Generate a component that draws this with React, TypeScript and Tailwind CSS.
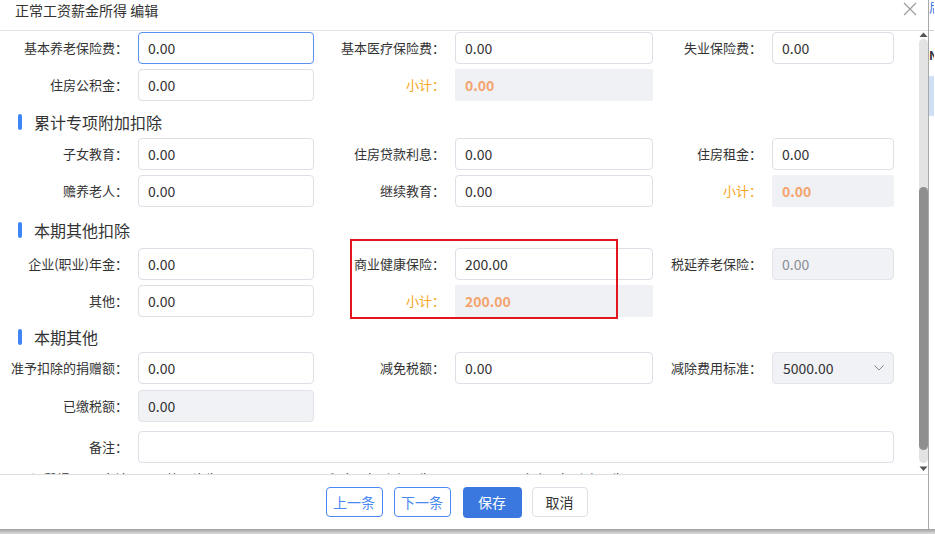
import React from "react";

type Variant = "normal" | "focus" | "disabled" | "disabledGray" | "sub" | "select";

const W = {
  l1: "w-[138px]",
  l2: "w-[141px]",
  l3: "w-[119px]",
};

function Field({ w, value, variant = "normal" }: { w: string; value: string; variant?: Variant }) {
  if (variant === "sub") {
    return (
      <div className={`${w} h-[32px] shrink-0 rounded-[2px] bg-[#f0f1f5] pl-[10px] flex items-center text-[14px] font-bold text-[#f4a46e]`}>
        {value}
      </div>
    );
  }
  if (variant === "select") {
    return (
      <div className={`${w} h-[32px] shrink-0 rounded-[4px] border border-[#e1e3e8] bg-[#f0f2f6] pl-[10px] pr-[8px] flex items-center justify-between text-[14px] text-[#333]`}>
        <span>{value}</span>
        <svg width="10" height="6" viewBox="0 0 10 6" className="mr-[1px]">
          <path d="M0.5 0.5 L5 5 L9.5 0.5" fill="none" stroke="#888" strokeWidth="1" />
        </svg>
      </div>
    );
  }
  const cls =
    variant === "focus"
      ? "border-[#5b8ff0] bg-white text-[#333]"
      : variant === "disabled"
      ? "border-[#e1e3e8] bg-[#f0f2f6] text-[#333]"
      : variant === "disabledGray"
      ? "border-[#e1e3e8] bg-[#f0f2f6] text-[#8a8d93]"
      : "border-[#dcdfe6] bg-white text-[#333]";
  return (
    <div className={`${w} h-[32px] shrink-0 rounded-[4px] border ${cls} pl-[9px] flex items-center text-[14px]`}>
      {value}
    </div>
  );
}

function Label({ w, text, orange }: { w: string; text: string; orange?: boolean }) {
  return (
    <div
      className={`${w} shrink-0 pr-[10px] text-right text-[13px] leading-[18px] whitespace-nowrap ${
        orange ? "text-[#f5a623]" : "text-[#333]"
      }`}
    >
      {text}
    </div>
  );
}

function Heading({ text, cls }: { text: string; cls: string }) {
  return (
    <div className={`flex items-center pl-[18px] ${cls}`}>
      <div className="w-[4px] h-[16px] rounded-full bg-[#3f86f4]" />
      <span className="ml-[12px] text-[16px] leading-[20px] text-[#333]">{text}</span>
    </div>
  );
}

export default function App() {
  return (
    <div className="w-[935px] h-[534px] overflow-hidden bg-white font-['Noto_Sans_CJK_SC','Noto_Sans',sans-serif] flex flex-col">
      <div className="flex h-[529px]">
        {/* dialog */}
        <div className="w-[929px] h-[529px] bg-white flex flex-col border-r border-[#a9a9a9]">
          {/* header */}
          <div className="h-[31px] shrink-0 border-b border-[#e3e3e3] flex items-center justify-between pl-[15px] pr-[11px]">
            <span className="text-[14px] leading-[20px] text-[#333] -mt-[10px]">正常工资薪金所得 编辑</span>
            <svg width="14" height="14" viewBox="0 0 14 14" className="-mt-[12px]">
              <path d="M1 1 L13 13 M13 1 L1 13" stroke="#9a9a9a" strokeWidth="1.1" />
            </svg>
          </div>

          {/* body */}
          <div className="h-[443px] shrink-0 flex">
            <div className="w-[919px] h-[443px] overflow-hidden pt-[1px] relative">
              {/* r1 */}
              <div className="flex items-center h-[32px]">
                <Label w={W.l1} text="基本养老保险费：" />
                <Field w="w-[176px]" value="0.00" variant="focus" />
                <Label w={W.l2} text="基本医疗保险费：" />
                <Field w="w-[198px]" value="0.00" />
                <Label w={W.l3} text="失业保险费：" />
                <Field w="w-[122px]" value="0.00" />
              </div>
              {/* r2 */}
              <div className="flex items-center h-[32px] mt-[5px]">
                <Label w={W.l1} text="住房公积金：" />
                <Field w="w-[176px]" value="0.00" />
                <Label w={W.l2} text="小计：" orange />
                <Field w="w-[198px]" value="0.00" variant="sub" />
              </div>

              <Heading text="累计专项附加扣除" cls="pt-[11px] pb-[6px]" />
              {/* r3 */}
              <div className="flex items-center h-[32px]">
                <Label w={W.l1} text="子女教育：" />
                <Field w="w-[176px]" value="0.00" />
                <Label w={W.l2} text="住房贷款利息：" />
                <Field w="w-[198px]" value="0.00" />
                <Label w={W.l3} text="住房租金：" />
                <Field w="w-[122px]" value="0.00" />
              </div>
              {/* r4 */}
              <div className="flex items-center h-[32px] mt-[5px]">
                <Label w={W.l1} text="赡养老人：" />
                <Field w="w-[176px]" value="0.00" />
                <Label w={W.l2} text="继续教育：" />
                <Field w="w-[198px]" value="0.00" />
                <Label w={W.l3} text="小计：" orange />
                <Field w="w-[122px]" value="0.00" variant="sub" />
              </div>

              <Heading text="本期其他扣除" cls="pt-[13px] pb-[8px]" />
              {/* r5 */}
              <div className="flex items-center h-[32px]">
                <Label w={W.l1} text="企业(职业)年金：" />
                <Field w="w-[176px]" value="0.00" />
                <Label w={W.l2} text="商业健康保险：" />
                <Field w="w-[198px]" value="200.00" />
                <Label w={W.l3} text="税延养老保险：" />
                <Field w="w-[122px]" value="0.00" variant="disabledGray" />
              </div>
              {/* r6 */}
              <div className="flex items-center h-[32px] mt-[5px]">
                <Label w={W.l1} text="其他：" />
                <Field w="w-[176px]" value="0.00" />
                <Label w={W.l2} text="小计：" orange />
                <Field w="w-[198px]" value="200.00" variant="sub" />
              </div>

              <Heading text="本期其他" cls="pt-[10px] pb-[5px]" />
              {/* r7 */}
              <div className="flex items-center h-[32px]">
                <Label w={W.l1} text="准予扣除的捐赠额：" />
                <Field w="w-[176px]" value="0.00" />
                <Label w={W.l2} text="减免税额：" />
                <Field w="w-[198px]" value="0.00" />
                <Label w={W.l3} text="减除费用标准：" />
                <Field w="w-[122px]" value="5000.00" variant="select" />
              </div>
              {/* r8 */}
              <div className="flex items-center h-[32px] mt-[6px]">
                <Label w={W.l1} text="已缴税额：" />
                <Field w="w-[176px]" value="0.00" variant="disabled" />
              </div>
              {/* r9 */}
              <div className="flex items-center h-[32px] mt-[9px]">
                <Label w={W.l1} text="备注：" />
                <Field w="w-[756px]" value="" />
              </div>
              {/* hint */}
              <div className="mt-[6px] pl-[31px] text-[13px] leading-[20px] text-[#333] whitespace-nowrap">
                温馨提示：&nbsp;&nbsp;本地区月平均工资为：10646.00元，&nbsp;公积金可扣除上限为：2002.56元，&nbsp;个人可扣除上限为：&nbsp;1277.52元
              </div>

              {/* annotation */}
              <div className="absolute left-[350px] top-[208px] w-[268px] h-[80px] border-2 border-[#e3161d]" />
            </div>

            {/* scrollbar */}
            <div className="w-[10px] h-[443px] flex flex-col items-center">
              <svg width="9" height="6" viewBox="0 0 9 6" className="mt-[1px]">
                <path d="M4.5 0.5 L8.5 5 L0.5 5 Z" fill="#555" />
              </svg>
              <div className="mt-[1px] w-[9px] h-[424px] rounded-full bg-[#e3e3e3] flex flex-col">
                <div className="mt-[148px] w-[9px] h-[263px] rounded-full bg-[#8f8f8f]" />
              </div>
              <svg width="9" height="6" viewBox="0 0 9 6" className="mt-[3px]">
                <path d="M0.5 0.5 L8.5 0.5 L4.5 5 Z" fill="#555" />
              </svg>
            </div>
          </div>

          {/* footer */}
          <div className="flex-1 border-t border-[#dedede] flex items-center justify-center pr-[15px]">
            <div className="flex items-center">
              <div className="w-[57px] h-[30px] rounded-[4px] border border-[#4a89f3] text-[#4a89f3] text-[14px] flex items-center justify-center">
                上一条
              </div>
              <div className="ml-[11px] w-[57px] h-[30px] rounded-[4px] border border-[#4a89f3] text-[#4a89f3] text-[14px] flex items-center justify-center">
                下一条
              </div>
              <div className="ml-[12px] w-[59px] h-[31px] rounded-[4px] bg-[#3a78e0] text-white text-[14px] flex items-center justify-center">
                保存
              </div>
              <div className="ml-[10px] w-[56px] h-[30px] rounded-[4px] border border-[#dcdfe6] bg-white text-[#333] text-[14px] flex items-center justify-center">
                取消
              </div>
            </div>
          </div>
        </div>
        {/* background strip */}
        <div className="w-[5px] flex flex-col">
          <div className="h-[14px] text-[13px] leading-[14px] text-[#3a78e0] overflow-hidden">后</div>
          <div className="mt-[16px] h-[1px] bg-[#d0d0d0]" />
          <div className="mt-[17px] h-[14px] text-[12px] leading-[14px] text-[#333] overflow-hidden font-bold">N</div>
          <div className="mt-[14px] h-[40px] bg-[#cfe0f5]" />
          <div className="flex-1 bg-white" />
        </div>
      </div>
      <div className="h-[5px] bg-linear-to-b from-[#a0a0a0] to-[#dedede]" />
    </div>
  );
}
